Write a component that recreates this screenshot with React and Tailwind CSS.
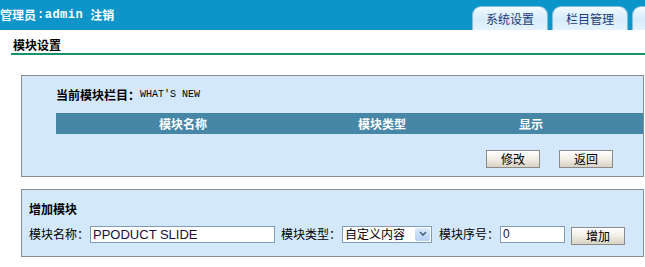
import { useState } from "react";

const cjk = { fontFamily: '"Noto Sans CJK SC", "Liberation Sans", sans-serif' };
const mono = { fontFamily: '"Liberation Mono", "Noto Sans CJK SC", monospace' };

function Tab({ label }) {
  return (
    <div className="flex h-[24px] w-[76px] shrink-0 items-center justify-center rounded-t-[9px] border border-b-0 border-[#7cbfe3] bg-gradient-to-b from-[#f4fbff] via-[#d6ecfa] to-[#e4f3fd] text-[12px] text-[#1d3b78]">
      {label}
    </div>
  );
}

function OldButton({ children, className = "" }) {
  return (
    <button
      type="button"
      className={
        "flex h-[18px] w-[54px] items-center justify-center border border-[#8a8a8a] bg-gradient-to-b from-[#ffffff] via-[#f1eee6] to-[#d8d2c2] text-[12px] leading-none text-black " +
        className
      }
    >
      {children}
    </button>
  );
}

export default function App() {
  const [name, setName] = useState("PPODUCT SLIDE");
  const [order, setOrder] = useState("0");

  return (
    <div className="h-[267px] w-[645px] overflow-hidden bg-white" style={cjk}>
      <header className="flex h-[30px] items-end bg-[#0b95c8]">
        <div className="flex h-[30px] w-[472px] shrink-0 items-center pb-[1px] text-[12px] font-bold text-white">
          <span>管理员</span>
          <span style={mono} className="ml-[1px] text-[12px] tracking-[0.5px]">
            :admin
          </span>
          <span className="ml-[7px]">注销</span>
        </div>
        <div className="flex shrink-0 gap-[4px]">
          <Tab label="系统设置" />
          <Tab label="栏目管理" />
          <Tab label="模板管理" />
        </div>
      </header>

      <div className="ml-[11px] mt-[8px] border-b-2 border-[#17926f] pb-[1px] pl-[2px] text-[12px] font-bold leading-[14px] text-black">
        模块设置
      </div>

      <section className="ml-[21px] mt-[20px] h-[102px] w-[623px] border border-[#8c8c8c] bg-[#d3e8fb] pl-[34px] pt-[12px]">
        <div className="flex items-center text-[12px] leading-[14px]">
          <span className="font-bold text-black">当前模块栏目：</span>
          <span style={mono} className="text-[10px] text-black">
            WHAT'S NEW
          </span>
        </div>
        <div className="mt-[11px] flex h-[21px] items-center bg-[#4687a8] text-[12px] font-bold text-white">
          <div className="w-[254px] text-center">模块名称</div>
          <div className="w-[144px] text-center">模块类型</div>
          <div className="w-[154px] text-center">显示</div>
        </div>
        <div className="mt-[16px] flex gap-[19px] pl-[430px]">
          <OldButton>修改</OldButton>
          <OldButton>返回</OldButton>
        </div>
      </section>

      <section className="ml-[21px] mt-[12px] h-[68px] w-[623px] border border-[#8c8c8c] bg-[#d3e8fb] pl-[7px] pt-[12px]">
        <div className="text-[12px] font-bold leading-[14px] text-black">增加模块</div>
        <div className="mt-[7px] flex items-center text-[12px] text-black">
          <span>模块名称：</span>
          <input
            value={name}
            onChange={(e) => setName(e.target.value)}
            className="ml-[1px] h-[17px] w-[185px] border border-[#7f9db9] bg-white px-[2px] text-[13px] leading-none text-[#1a1040] outline-none"
            style={{ fontFamily: '"Liberation Sans", Arial, sans-serif' }}
          />
          <span className="ml-[6px]">模块类型：</span>
          <div className="ml-[1px] flex h-[17px] w-[90px] items-center border border-[#7f9db9] bg-white pl-[2px]">
            <span className="flex-1 text-[12px] leading-none">自定义内容</span>
            <span className="mr-[1px] flex h-[13px] w-[15px] items-center justify-center rounded-[2px] bg-gradient-to-b from-[#dcebfd] to-[#b6cff5]">
              <svg width="8" height="6" viewBox="0 0 8 6">
                <path d="M1 1 L4 4 L7 1" fill="none" stroke="#4d6185" strokeWidth="1.6" />
              </svg>
            </span>
          </div>
          <span className="ml-[7px]">模块序号：</span>
          <input
            value={order}
            onChange={(e) => setOrder(e.target.value)}
            className="ml-[1px] h-[17px] w-[65px] border border-[#7f9db9] bg-white px-[2px] text-[12px] leading-none text-[#1a1040] outline-none"
            style={{ fontFamily: '"Liberation Sans", Arial, sans-serif' }}
          />
          <OldButton className="ml-[6px] mt-[4px]">增加</OldButton>
        </div>
      </section>
    </div>
  );
}
